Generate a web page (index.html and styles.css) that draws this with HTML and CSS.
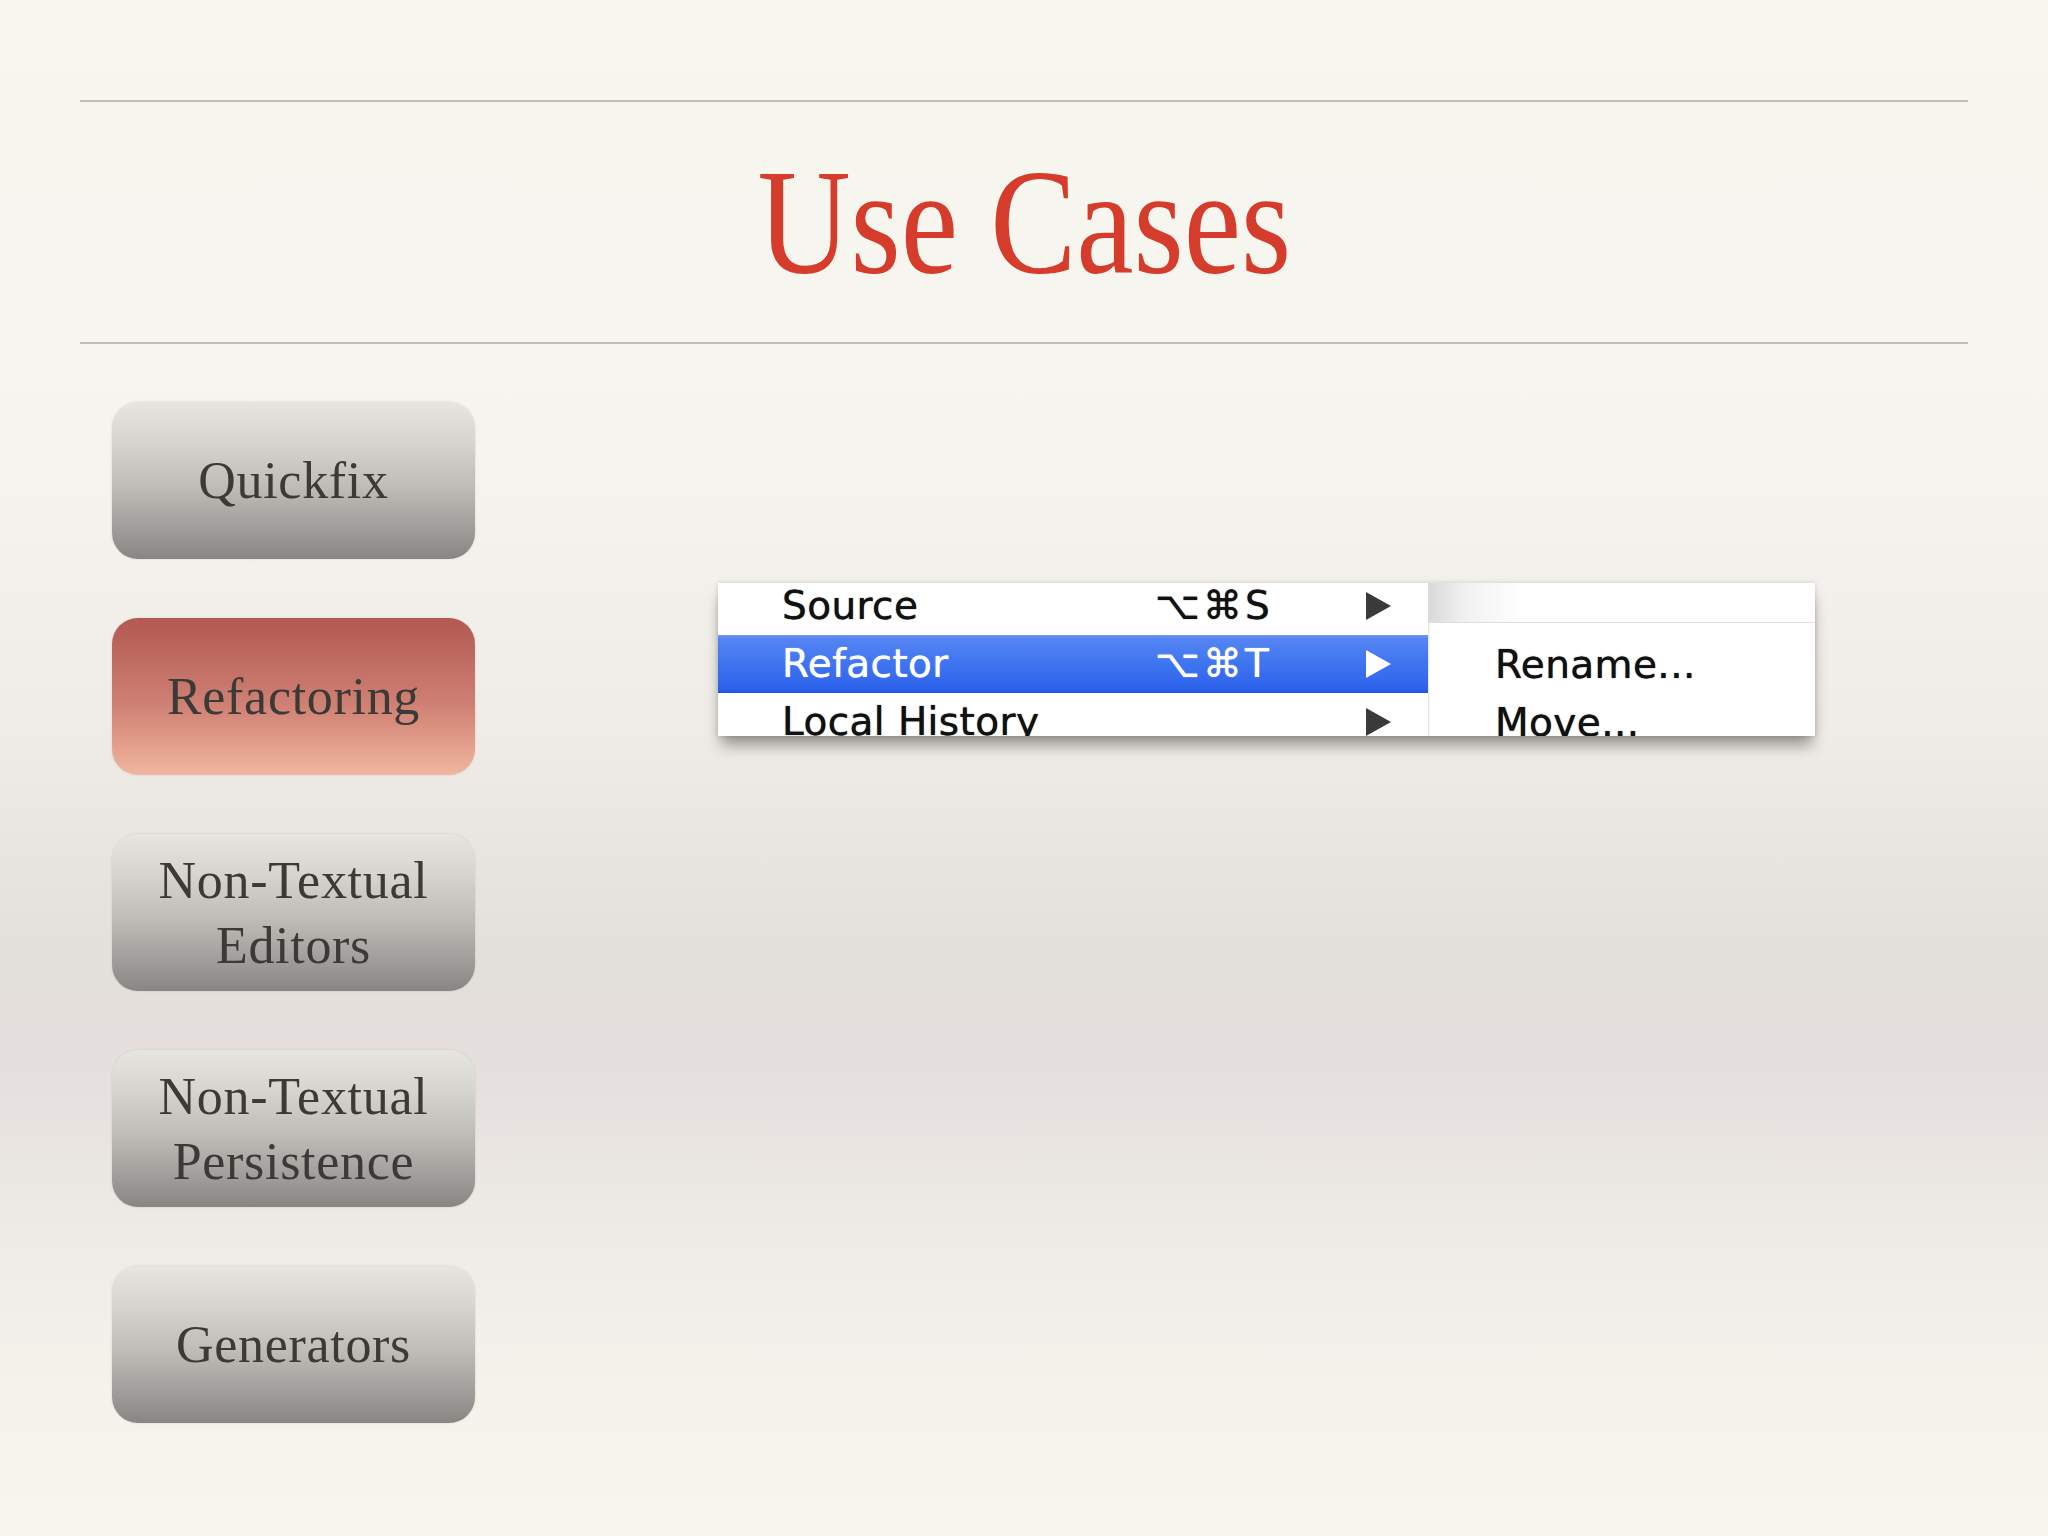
FILE: index.html
```html
<!DOCTYPE html>
<html lang="en">
<head>
<meta charset="utf-8">
<title>Use Cases</title>
<link rel="stylesheet" href="styles.css">
</head>
<body>
<div class="slide">
  <header class="head">
    <div class="rule"></div>
    <h1 class="title"><span class="title-text">Use Cases</span></h1>
    <div class="rule"></div>
  </header>
  <main class="content">
    <nav class="cases">
      <div class="case">Quickfix</div>
      <div class="case active">Refactoring</div>
      <div class="case two">Non-Textual<br>Editors</div>
      <div class="case two">Non-Textual<br>Persistence</div>
      <div class="case">Generators</div>
    </nav>
    <section class="shot">
      <div class="menu">
        <div class="menu-main">
          <div class="list">
            <div class="item"><span class="label">Source</span><span class="key">⌥⌘S</span><span class="arrow"></span></div>
            <div class="item selected"><span class="label">Refactor</span><span class="key">⌥⌘T</span><span class="arrow"></span></div>
            <div class="item"><span class="label">Local History</span><span class="key"></span><span class="arrow"></span></div>
          </div>
        </div>
        <div class="submenu">
          <div class="sub-top"></div>
          <div class="sub-list">
            <div class="sub-item">Rename...</div>
            <div class="sub-item">Move...</div>
          </div>
        </div>
      </div>
    </section>
  </main>
</div>
</body>
</html>
```
FILE: styles.css
```css
html, body {
  margin: 0;
  padding: 0;
}
body {
  width: 2048px;
  height: 1536px;
  overflow: hidden;
  background: linear-gradient(180deg,
    #f7f6ef 0%,
    #f6f4ee 30%,
    #efece7 48%,
    #e3dfdb 62%,
    #e5e0dd 70%,
    #eeeae6 80%,
    #f5f1eb 90%,
    #f8f5ee 100%);
  font-family: "Liberation Serif", "Times New Roman", serif;
}
.slide {
  width: 2048px;
  height: 1536px;
}
.head {
  padding-top: 100px;
  margin: 0 80px;
}
.rule {
  height: 2px;
  background: #bfbdb5;
}
.title {
  margin: 0;
  height: 240px;
  line-height: 240px;
  text-align: center;
  font-weight: normal;
  font-size: 150px;
  color: #d63c2b;
  font-family: "Liberation Serif", "Times New Roman", serif;
}
.title-text {
  display: inline-block;
  transform: scaleX(0.86);
}
.content {
  display: flex;
  align-items: flex-start;
  padding-left: 112px;
  margin-top: 58px;
}
.cases {
  display: flex;
  flex-direction: column;
  gap: 59px;
  width: 363px;
}
.case {
  height: 157px;
  border-radius: 26px;
  display: flex;
  align-items: center;
  justify-content: center;
  text-align: center;
  font-size: 52px;
  line-height: 65px;
  letter-spacing: 0.7px;
  color: #3b3a37;
  background: linear-gradient(180deg, #e6e5df 0%, #d6d5cf 25%, #bcbbb6 55%, #9e9c98 82%, #888682 100%);
  box-shadow: 0 0 2px rgba(120, 118, 112, 0.3);
}
.case.active {
  background: linear-gradient(180deg, #b35951 0%, #bf6a61 25%, #cf8074 55%, #e29d8a 80%, #f0b6a0 100%);
}
.shot {
  margin-left: 243px;
  margin-top: 181px;
}
.menu {
  display: flex;
  height: 153px;
  box-shadow: 0 12px 14px -3px rgba(0, 0, 0, 0.38), 0 0 5px rgba(0, 0, 0, 0.15);
  font-family: "DejaVu Sans", "Liberation Sans", sans-serif;
  font-size: 39px;
  letter-spacing: 0.4px;
  color: #111111;
  text-shadow: 0 0 1px currentColor;
}
.menu-main {
  width: 710px;
  height: 153px;
  background: #ffffff;
  overflow: hidden;
}
.list {
  margin-top: -6px;
}
.item {
  display: grid;
  grid-template-columns: 373px 211px 25px;
  align-items: center;
  height: 58px;
  line-height: 58px;
  padding-left: 64px;
}
.label {
  white-space: nowrap;
}
.key {
  letter-spacing: 3px;
  white-space: nowrap;
}
.arrow {
  width: 0;
  height: 0;
  border-left: 25px solid #3a3a3a;
  border-top: 14px solid transparent;
  border-bottom: 14px solid transparent;
}
.item.selected {
  color: #ffffff;
  background: linear-gradient(180deg, #7096f6 0%, #5585f3 6%, #4176f1 45%, #2d63eb 92%, #1f54da 100%);
}
.item.selected .arrow {
  border-left-color: #ffffff;
}
.submenu {
  width: 387px;
  height: 153px;
  background: #ffffff;
  overflow: hidden;
  box-shadow: inset 2px 0 2px -1px rgba(0, 0, 0, 0.12);
}
.sub-top {
  height: 39px;
  border-bottom: 1px solid #dedede;
  background: linear-gradient(90deg, #d9d9d9 0%, #f2f2f2 10%, #ffffff 25%);
}
.sub-list {
  padding-top: 13px;
}
.sub-item {
  height: 58px;
  line-height: 58px;
  padding-left: 67px;
  white-space: nowrap;
}
```
